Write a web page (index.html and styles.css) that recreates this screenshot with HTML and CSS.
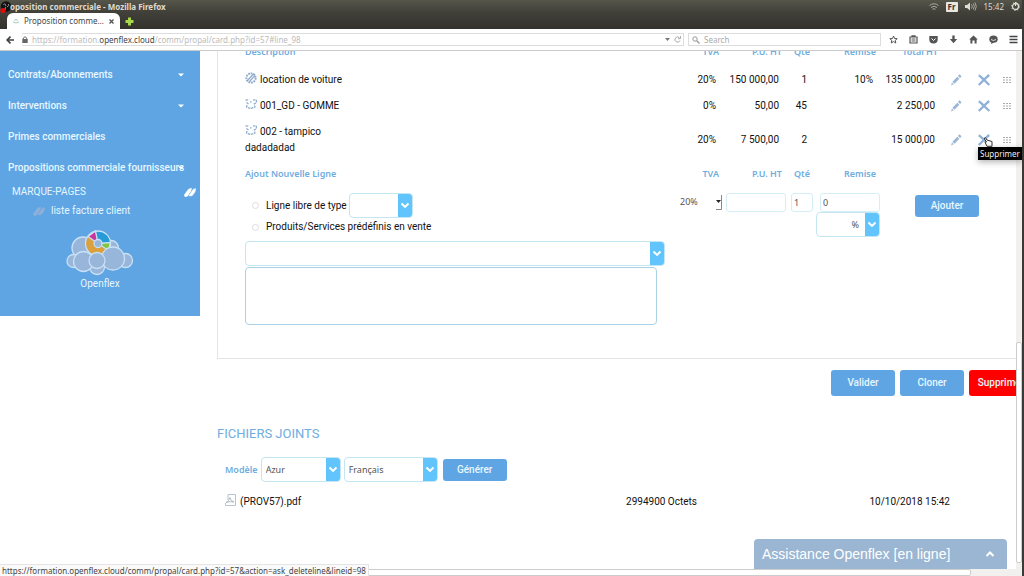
FILE: index.html
```html
<!DOCTYPE html>
<html lang="fr">
<head>
<meta charset="utf-8">
<title>Proposition commerciale</title>
<link rel="stylesheet" href="styles.css">
</head>
<body>
<svg class="defs" aria-hidden="true">
  <symbol id="chev" viewBox="0 0 10 8"><path d="M1.500 2 5 5.400 8.500 2" fill="none" stroke="#fff" stroke-width="2"/></symbol>
  <symbol id="caret" viewBox="0 0 6 4"><path d="M0 .5h6L3 3.500z" fill="#fff"/></symbol>
  <symbol id="pencil" viewBox="0 0 12 12"><path d="M1 11.500 2 8.200 3.900 10.200z" fill="#aac0da"/><path d="M3.500 8.700 8.300 3.700M9 3 10.500 1.300" stroke="#9bb5d5" stroke-width="2.800"/></symbol>
  <symbol id="cross" viewBox="0 0 12 12"><path d="M.8 1.200C4 3.500 8 8 11.400 11M11.200 1C8 3.500 4 8 .8 11" fill="none" stroke="#8fb1d8" stroke-width="2.300"/></symbol>
  <symbol id="grip" viewBox="0 0 8 8"><path d="M0 1.500h8M0 4h8M0 6.500h8" stroke="#a9a9a9" stroke-width="1.200" stroke-dasharray="2 1"/></symbol>
  <symbol id="box" viewBox="0 0 12 10"><path d="M.5 1.200 4 .7M8 .8 11.500 1.300V4M1.500 3.500 4 5.300M11 4 8 5.500M1.800 6v2.200l4 1.300 4-1.300V6M5 2.800h1.500" fill="none" stroke="#8eaccc" stroke-width="1.300" stroke-dasharray="2.500 .8"/></symbol>
  <symbol id="service" viewBox="0 0 12 12"><circle cx="6" cy="6" r="4.600" fill="none" stroke="#8eaccc" stroke-width="2" stroke-dasharray="1.800 .8"/><path d="M2 9 8.500 2M4 10 10 3.500" stroke="#8eaccc" stroke-width="1.200"/></symbol>
  <symbol id="tags" viewBox="0 0 12 9"><path d="M.3 7 4.500 1.200 7.500.3 6.800 3 3.300 8.200 1 8.700zM4.800 7.800l4.500-6.600L11.600.7 11 4 8 7.800z" fill="currentColor" stroke="currentColor" stroke-width=".6"/></symbol>
</svg>

<header class="titlebar">
  <svg class="app" viewBox="0 0 12 12"><circle cx="6" cy="5.500" r="5.200" fill="#141210"/><path d="M3.500 3.500C5 2 6 4 5.500 5M8 3c1.500 1 0 3-1 2.500M6 8.500c-1.500-.5-1-2 0-2.500" fill="none" stroke="#aaa"/><circle cx="3" cy="9.500" r="2.600" fill="#e30b0b"/></svg>
  <h1 class="window-title">oposition commerciale - Mozilla Firefox</h1>
  <div class="tray">
    <svg width="10" height="8" viewBox="0 0 10 8" fill="none" stroke="#aaa89f"><path d="M.5 2.500q4.500-3.500 9 0M2 4.500q3-2.500 6 0M3.500 6.200q1.500-1 3 0"/></svg>
    <span class="lang">Fr</span>
    <svg width="12" height="9" viewBox="0 0 12 9"><path d="M0 3h2l3-2.500v8L2 6H0z" fill="#dfdbd2"/><path d="M6.500 2.500q1.500 2 0 4M8.300 1.500q2 3 0 6M10 .5q2.500 4 0 8" fill="none" stroke="#aaa89f"/></svg>
    <span>15:42</span>
    <svg width="9" height="9" viewBox="0 0 9 9"><circle cx="4.500" cy="4.500" r="3" fill="none" stroke="#dfdbd2" stroke-width="1.300"/><circle cx="4.500" cy="4.500" r="3.900" fill="none" stroke="#dfdbd2" stroke-dasharray="1.200 1.860"/><path d="M4.500 0v4" stroke="#dfdbd2"/></svg>
  </div>
</header>

<nav class="tabs">
  <div class="tab">
    <svg width="8" height="6" viewBox="0 0 8 6"><path d="M1 4q3 2 6 0M2 2.500q2-2 4 0" fill="none" stroke="#a9cdbb"/></svg>
    <span class="tab-label">Proposition comme…</span>
    <button class="plain" aria-label="Fermer l’onglet"><svg width="5" height="5" viewBox="0 0 5 5"><path d="M.5.5l4 4M4.500.5l-4 4" stroke="#555" stroke-width="1.400"/></svg></button>
  </div>
  <button class="plain" aria-label="Nouvel onglet"><svg width="9" height="9" viewBox="0 0 9 9"><path d="M4.500.5v8M.5 4.500h8" stroke="#a9d94a" stroke-width="3"/></svg></button>
</nav>

<div class="toolbar">
  <button class="plain back" aria-label="Retour"><svg width="8" height="8" viewBox="0 0 8 8"><path d="M8 4H1.500M4.500.7 1.200 4l3.300 3.300" fill="none" stroke="#444" stroke-width="1.700"/></svg></button>
  <div class="address">
    <svg width="6" height="7" viewBox="0 0 6 7"><path d="M.3 3h5.400v4H.3z" fill="#666"/><path d="M1.300 3V2q1.700-2.500 3.400 0v1" fill="none" stroke="#666"/></svg>
    <span class="url">https://formation.<b>openflex.cloud</b>/comm/propal/card.php?id=57#line_98</span>
    <svg width="5" height="3" viewBox="0 0 5 3"><path d="M0 0h5L2.500 3z" fill="#777"/></svg>
    <svg width="7" height="7" viewBox="0 0 7 7"><path d="M5.500 1.800A2.600 2.600 0 1 0 6 4.500M6.500 0v2.700H4" fill="none" stroke="#aaa"/></svg>
  </div>
  <label class="search"><svg width="8" height="8" viewBox="0 0 8 8"><circle cx="3" cy="3" r="2.200" fill="none" stroke="#999"/><path d="M4.700 4.700 7.500 7.500" stroke="#999" stroke-width="1.300"/></svg><input type="search" placeholder="Search" aria-label="Search"></label>
  <div class="tools">
    <svg width="9" height="9" viewBox="0 0 9 9"><path d="M4.500 1l1 2.500 2.700.2-2 1.700.6 2.600-2.300-1.400L2.200 8l.6-2.600-2-1.700 2.700-.2z" fill="none" stroke="#555"/></svg>
    <svg width="9" height="9" viewBox="0 0 9 9"><path d="M1 2h7v6H1zM3 2V.8h3V2M2.500 4h4M2.500 6h4" fill="none" stroke="#555" stroke-width="1.200"/></svg>
    <svg width="9" height="9" viewBox="0 0 9 9"><path d="M.3 1h8.400v3.500a4.200 4 0 0 1-8.400 0z" fill="#555"/><path d="M2.500 3.500l2 2 2-2" fill="none" stroke="#fff"/></svg>
    <svg width="9" height="9" viewBox="0 0 9 9"><path d="M3.300.5h2.400V4h2.500L4.500 8.300.8 4h2.500z" fill="#555"/></svg>
    <svg width="9" height="9" viewBox="0 0 9 9"><path d="M4.500.5l4.300 4H7.600v4h-2V5.500H3.400v3h-2v-4H.2z" fill="#555"/></svg>
    <svg width="9" height="9" viewBox="0 0 9 9"><ellipse cx="4.500" cy="4.200" rx="4.200" ry="3.600" fill="#555"/><path d="M2 9l.5-3 2.500 1.500z" fill="#555"/><path d="M2 4.500q2.500 2 5 0" fill="none" stroke="#fff" stroke-width=".8"/></svg>
    <svg width="9" height="9" viewBox="0 0 9 9"><path d="M.5 1.500h8M.5 4.500h8M.5 7.500h8" stroke="#444" stroke-width="1.500"/></svg>
  </div>
</div>

<div class="viewport">
  <div class="page">
    <aside class="sidebar">
      <ul class="menu">
        <li><a href="#">Contrats/Abonnements</a><svg class="caret"><use href="#caret"/></svg></li>
        <li><a href="#">Interventions</a><svg class="caret"><use href="#caret"/></svg></li>
        <li><a href="#">Primes commerciales</a></li>
        <li><a href="#">Propositions commerciale fournisseurs</a><svg class="caret"><use href="#caret"/></svg></li>
      </ul>
      <div class="bookmarks"><span>MARQUE-PAGES</span><svg class="tags"><use href="#tags"/></svg></div>
      <a class="bookmark" href="#"><svg class="tags dim"><use href="#tags"/></svg>liste facture client</a>
      <div class="brand">
        <svg width="68" height="46" viewBox="0 0 68 46" fill="#98b5da" stroke="#c9e1f6" stroke-width="1.300">
          <circle cx="45" cy="18" r="7.500"/><circle cx="17" cy="18" r="11"/><circle cx="7.500" cy="31" r="6.500"/><circle cx="59.500" cy="30.500" r="7"/>
          <circle cx="32" cy="13.500" r="8" fill="none" stroke="#dca03c" stroke-width="8"/>
          <path d="M32 13.500 29.500 1A12.500 12.500 0 0 1 44.500 13.500z" fill="#279bd8" stroke="none"/>
          <path d="M32 13.500 22 6.500 29.500 1z" fill="#c9359f" stroke="#c9e1f6"/>
          <path d="M32 13.500l12.500-1-2 8z" fill="#83c441" stroke="#c9e1f6"/>
          <circle cx="32" cy="13.500" r="12.500" fill="none"/><circle cx="32" cy="13.500" r="4"/>
          <circle cx="31" cy="37" r="7.500"/><circle cx="17.500" cy="31.500" r="10"/><circle cx="47" cy="28.500" r="11.500"/><circle cx="31" cy="30.500" r="8"/>
        </svg>
        <span>Openflex</span>
      </div>
    </aside>

    <main class="content">
      <section class="panel">
        <table class="lines">
          <colgroup><col><col class="c-tva"><col class="c-pu"><col class="c-qty"><col class="c-rem"><col class="c-total"><col class="c-edit"><col class="c-del"><col class="c-grip"></colgroup>
          <thead><tr><th class="text">Description</th><th>TVA</th><th>P.U. HT</th><th>Qté</th><th>Remise</th><th>Total HT</th><th></th><th></th><th></th></tr></thead>
          <tbody>
            <tr><td class="text"><svg class="kind"><use href="#service"/></svg>location de voiture</td><td>20%</td><td>150 000,00</td><td>1</td><td>10%</td><td>135 000,00</td><td class="act"><button class="plain" aria-label="Modifier"><svg class="ico"><use href="#pencil"/></svg></button></td><td class="act"><button class="plain" aria-label="Supprimer"><svg class="ico"><use href="#cross"/></svg></button></td><td class="act"><svg class="grip"><use href="#grip"/></svg></td></tr>
            <tr><td class="text"><svg class="kind"><use href="#box"/></svg>001_GD - GOMME</td><td>0%</td><td>50,00</td><td>45</td><td></td><td>2 250,00</td><td class="act"><button class="plain" aria-label="Modifier"><svg class="ico"><use href="#pencil"/></svg></button></td><td class="act"><button class="plain" aria-label="Supprimer"><svg class="ico"><use href="#cross"/></svg></button></td><td class="act"><svg class="grip"><use href="#grip"/></svg></td></tr>
            <tr class="double"><td class="text"><svg class="kind"><use href="#box"/></svg>002 - tampico<br>dadadadad</td><td>20%</td><td>7 500,00</td><td>2</td><td></td><td>15 000,00</td><td class="act"><button class="plain" aria-label="Modifier"><svg class="ico"><use href="#pencil"/></svg></button></td><td class="act"><span class="hover"><button class="plain" aria-label="Supprimer"><svg class="ico"><use href="#cross"/></svg></button><svg class="hand" viewBox="0 0 10 10"><path d="M1.500 1v1l2 3-1.500.3 2 4h5V4.500L4 3 2.500.7z" fill="#fff" stroke="#333"/></svg><span class="tip" role="tooltip">Supprimer</span></span></td><td class="act"><svg class="grip"><use href="#grip"/></svg></td></tr>
            <tr class="head"><th class="text">Ajout Nouvelle Ligne</th><th>TVA</th><th>P.U. HT</th><th>Qté</th><th>Remise</th><th></th><th></th><th></th><th></th></tr>
            <tr class="add">
              <td class="text">
                <div class="option"><input type="radio" name="kind" id="k1"><label for="k1">Ligne libre de type</label><span class="select s-type"><select aria-label="Type"><option></option></select><svg><use href="#chev"/></svg></span></div>
                <div class="option second"><input type="radio" name="kind" id="k2"><label for="k2">Produits/Services prédéfinis en vente</label></div>
                <span class="select s-product"><select aria-label="Produit"><option></option></select><svg><use href="#chev"/></svg></span>
                <textarea aria-label="Description"></textarea>
              </td>
              <td><span class="tva"><select aria-label="TVA"><option>20%</option></select><svg width="6" height="15" viewBox="0 0 6 15"><path d="M5.500 0v14.500H0" fill="none" stroke="#888"/><path d="M0 5h5L2.500 8z" fill="#222"/></svg></span></td>
              <td><input class="field" aria-label="P.U. HT"></td>
              <td><input class="field qty" aria-label="Qté" value="1"></td>
              <td><input class="field" aria-label="Remise" value="0"><span class="select s-unit"><select aria-label="Unité"><option>%</option></select><svg><use href="#chev"/></svg></span></td>
              <td colspan="4" class="submit"><button class="btn">Ajouter</button></td>
            </tr>
          </tbody>
        </table>
      </section>

      <div class="actions"><button class="btn">Valider</button><button class="btn">Cloner</button><button class="btn danger">Supprimer</button></div>

      <section class="files">
        <h2>FICHIERS JOINTS</h2>
        <div class="generate">
          <label for="model">Modèle</label>
          <span class="select s-model"><select id="model"><option>Azur</option></select><svg><use href="#chev"/></svg></span>
          <span class="select s-lang"><select aria-label="Langue"><option>Français</option></select><svg><use href="#chev"/></svg></span>
          <button class="btn">Générer</button>
        </div>
        <table class="docs"><tr>
          <td><a href="#"><svg width="11" height="12" viewBox="0 0 11 12" fill="none"><path d="M3 .5h7.500v11h-10V9M3 .5V6" stroke="#b8c4d0"/><path d="M1 8.500q3-1 4-5 .5 4 4 4.500-4-1-8 .5" stroke="#9eabb8" stroke-width=".8"/></svg>(PROV57).pdf</a></td>
          <td class="size">2994900 Octets</td><td class="date">10/10/2018 15:42</td>
        </tr></table>
      </section>
    </main>
  </div>
  <button class="chat"><span>Assistance Openflex [en ligne]</span><svg width="10" height="8" viewBox="0 0 10 8"><path d="M1.500 6 5 2.500 8.500 6" fill="none" stroke="#fff" stroke-width="2"/></svg></button>
  <div class="vscroll"><span></span></div>
</div>
<div class="hscroll"><span></span></div>
<div class="status">https://formation.openflex.cloud/comm/propal/card.php?id=57&amp;action=ask_deleteline&amp;lineid=98</div>
</body>
</html>
```
FILE: styles.css
```css
* { box-sizing: border-box; }
html, body { height: 100%; }
body {
  margin: 0;
  display: flex;
  flex-direction: column;
  overflow: hidden;
  background: #fff;
  border-right: 2px solid #3b3a36;
  font: 10px/16px Roboto, "Noto Sans", sans-serif;
  color: #111;
}
button, input, select, textarea { font: inherit; color: inherit; margin: 0; padding: 0; }
a { color: inherit; text-decoration: none; }
svg { display: block; flex: none; }
.defs { position: absolute; width: 0; height: 0; }
.plain { border: 0; background: none; display: block; }

/* Browser chrome */
.titlebar {
  display: flex;
  align-items: center;
  height: 13px;
  background: linear-gradient(#56554a, #403f38);
  color: #dfdbd2;
  font: 8px/12px "Noto Sans", sans-serif;
}
.app { width: 12px; height: 12px; }
.window-title { flex: 1; margin: 0 0 0 -2px; font: bold 8px/12px "Noto Sans", sans-serif; }
.tray { display: flex; align-items: center; gap: 7px; padding-right: 2px; }
.lang { background: #e8e6e0; color: #333; padding: 0 2px; line-height: 10px; font-weight: bold; border-radius: 1px; }
.tabs {
  display: flex;
  align-items: center;
  gap: 5px;
  height: 16px;
  padding-left: 7px;
  background: linear-gradient(#403f38, #33322d);
}
.tab {
  display: flex;
  align-items: center;
  gap: 4px;
  height: 16px;
  width: 113px;
  padding: 0 6px 0 5px;
  background: #fff;
  border-radius: 6px 6px 0 0;
  color: #444;
  font: 8px/14px "Noto Sans", sans-serif;
}
.tab-label { flex: 1; white-space: nowrap; }
.toolbar {
  display: flex;
  align-items: center;
  height: 22px;
  padding: 0 4px 0 6px;
  border-bottom: 1px solid #ccc;
  font: 8px/12px "Noto Sans", sans-serif;
}
.back { margin-right: 8px; }
.address, .search {
  display: flex;
  align-items: center;
  gap: 4px;
  height: 13px;
  border: 1px solid #ddd;
  border-left: 0;
}
.address { flex: 1; padding-right: 2px; }
.url { flex: 1; color: #bbb; white-space: nowrap; }
.url b { color: #444; font-weight: normal; }
.search { width: 193px; margin: 0 8px 0 4px; padding-left: 3px; border-left: 1px solid #ddd; }
.search input { width: 100%; border: 0; background: none; outline: 0; }
.search input::placeholder { color: #aaa; }
.tools { display: flex; gap: 11px; }

/* Page */
.viewport { position: relative; flex: 1; min-height: 0; overflow: hidden; }
.page { display: flex; align-items: flex-start; }
.sidebar {
  flex: none;
  width: 200px;
  padding: 8px 0 24px;
  background: #5fa5e4;
  color: #e6f7ff;
}
.menu { list-style: none; margin: 0 0 1px; padding: 0; font-weight: 500; }
.menu li { display: flex; align-items: center; height: 31px; padding-left: 8px; position: relative; white-space: nowrap; }
.menu .caret { position: absolute; right: 16px; width: 6px; height: 4px; }
.bookmarks { display: flex; justify-content: space-between; align-items: center; padding: 0 4px 0 12px; }
.tags { width: 12px; height: 9px; color: #fff; }
.tags.dim { color: #8fb0d8; }
.bookmark { display: flex; align-items: center; gap: 6px; padding-left: 33px; line-height: 22px; }
.brand { display: flex; flex-direction: column; align-items: center; padding-top: 8px; }

.content { flex: 1; min-width: 0; padding-left: 17px; }
.panel { margin-top: -9px; border: 1px solid #e4e4e4; border-right: 0; padding: 0 7px 33px 27px; }
.lines { width: 100%; border-collapse: collapse; table-layout: fixed; }
.c-tva { width: 53px; }
.c-pu { width: 63px; }
.c-qty { width: 28px; }
.c-rem { width: 66px; }
.c-total { width: 62px; }
.c-edit { width: 28px; }
.c-del { width: 28px; }
.c-grip { width: 17px; }
.lines th { padding: 0 4px 0 0; color: #6fade0; font: 600 9px/18px "Noto Sans", sans-serif; text-align: right; white-space: nowrap; }
.lines td { height: 26px; padding: 0 7px 0 0; text-align: right; white-space: nowrap; }
.lines thead th { height: 24px; vertical-align: top; }
.lines .text { text-align: left; }
.lines .double td { height: 42px; line-height: 16px; }
.lines .head th { height: 26px; }
.lines .act { padding: 0; }
.act svg { margin: 0 auto; }
.act .plain { margin: 0 auto; }
.kind { display: inline-block; width: 12px; height: 12px; margin-right: 3px; vertical-align: -1px; }
.ico { width: 12px; height: 12px; }
.grip { width: 8px; height: 8px; }
.hover { position: relative; display: block; }
.act .hand { position: absolute; left: 13px; top: 3px; width: 10px; height: 10px; }
.tip {
  position: absolute;
  z-index: 2;
  left: 8px;
  top: 13px;
  padding: 0 2px;
  background: #000;
  color: #eee;
  font: 8px/13px "Noto Sans", sans-serif;
  box-shadow: 0 2px 6px rgba(0, 0, 0, .3);
}
.lines .add td { vertical-align: top; padding: 6px 0 0; }
.option { display: flex; align-items: center; height: 25px; padding-left: 7px; }
.option.second { height: 18px; }
.option input { appearance: none; width: 7px; height: 7px; margin-right: 7px; border: 1px solid #ddd; border-radius: 50%; }
.select { position: relative; display: block; height: 25px; border: 1px solid #c4e6f3; border-radius: 4px; overflow: hidden; background: #fff; }
.select select { appearance: none; display: block; width: 100%; height: 100%; border: 0; padding: 0 20px 0 4px; background: none; font: 9px/16px "Noto Sans", sans-serif; color: #555; }
.select svg { position: absolute; top: 0; right: 0; width: 14px; height: 100%; padding: 0 2px; background: #62c4fc; pointer-events: none; }
.s-type { width: 64px; margin-left: 2px; }
.s-product { width: 420px; margin-top: 5px; }
.s-unit { width: 64px; margin-left: auto; }
.s-unit select { text-align: right; }
.s-model { width: 80px; }
.s-lang { width: 94px; }
textarea { display: block; width: 412px; height: 58px; margin-top: 1px; border: 1px solid #a9d3e4; border-radius: 4px; resize: none; }
.tva { display: flex; align-items: center; justify-content: flex-end; padding-right: 1px; height: 18px; color: #555; }
.tva select { appearance: none; border: 0; background: none; width: 36px; font: 9px/16px "Noto Sans", sans-serif; }
.field { width: 60px; height: 19px; border: 1px solid #d4edf7; border-radius: 3px; padding: 0 2px; font: 9px/16px "Noto Sans", sans-serif; color: #555; }
.qty { width: 22px; margin-right: 1px; }
.btn { width: 64px; height: 22px; border: 0; border-radius: 3px; background: #5fa5e4; color: #e6f7ff; font: 500 10px/16px Roboto, sans-serif; }
.lines .add .submit { text-align: left; padding: 8px 0 0 35px; }
.actions { display: flex; justify-content: flex-end; gap: 5px; margin-top: 11px; margin-right: -11px; }
.actions .btn { height: 26px; flex: none; }
.actions .danger { background: #f00; }
.files h2 { margin: 28px 0 0; font: 400 13px/20px Roboto, sans-serif; color: #6fade0; }
.generate { display: flex; align-items: center; gap: 3px; margin: 13px 0 0 8px; color: #6fade0; }
.generate label { font: 600 9px/16px "Noto Sans", sans-serif; }
.generate .btn { margin-left: 2px; }
.docs { width: 100%; border-collapse: collapse; margin-top: 12px; table-layout: fixed; }
.docs td { padding: 0 0 0 8px; }
.docs a { display: flex; gap: 4px; }
.docs .size { text-align: right; width: 236px; }
.docs .date { text-align: right; width: 325px; padding-right: 72px; }

.chat {
  position: absolute;
  right: 15px;
  bottom: 0;
  display: flex;
  justify-content: space-between;
  align-items: center;
  width: 253px;
  height: 30px;
  padding: 0 12px 0 8px;
  border: 0;
  border-radius: 4px 4px 0 0;
  background: #9ab6d2;
  color: #fff;
  font: 14px/20px "Liberation Sans", Arial, sans-serif;
}
.vscroll { position: absolute; right: 0; top: 0; bottom: 0; width: 6px; background: #f1f0ee; display: flex; flex-direction: column; justify-content: flex-end; padding-bottom: 6px; }
.vscroll span { height: 221px; border: 1px solid #ccc; border-radius: 2px; background: #fff; }
.hscroll { height: 7px; flex: none; background: #f1f0ee; }
.hscroll span { display: block; width: 95%; height: 7px; border: 1px solid #ccc; border-radius: 2px; background: #fff; }
.status {
  position: absolute;
  left: 0;
  bottom: 0;
  padding: 0 2px;
  background: #fafafa;
  border: 1px solid #e4e4e4;
  border-width: 1px 1px 0 0;
  font: 8px/11px "Noto Sans", sans-serif;
  color: #444;
}
```
